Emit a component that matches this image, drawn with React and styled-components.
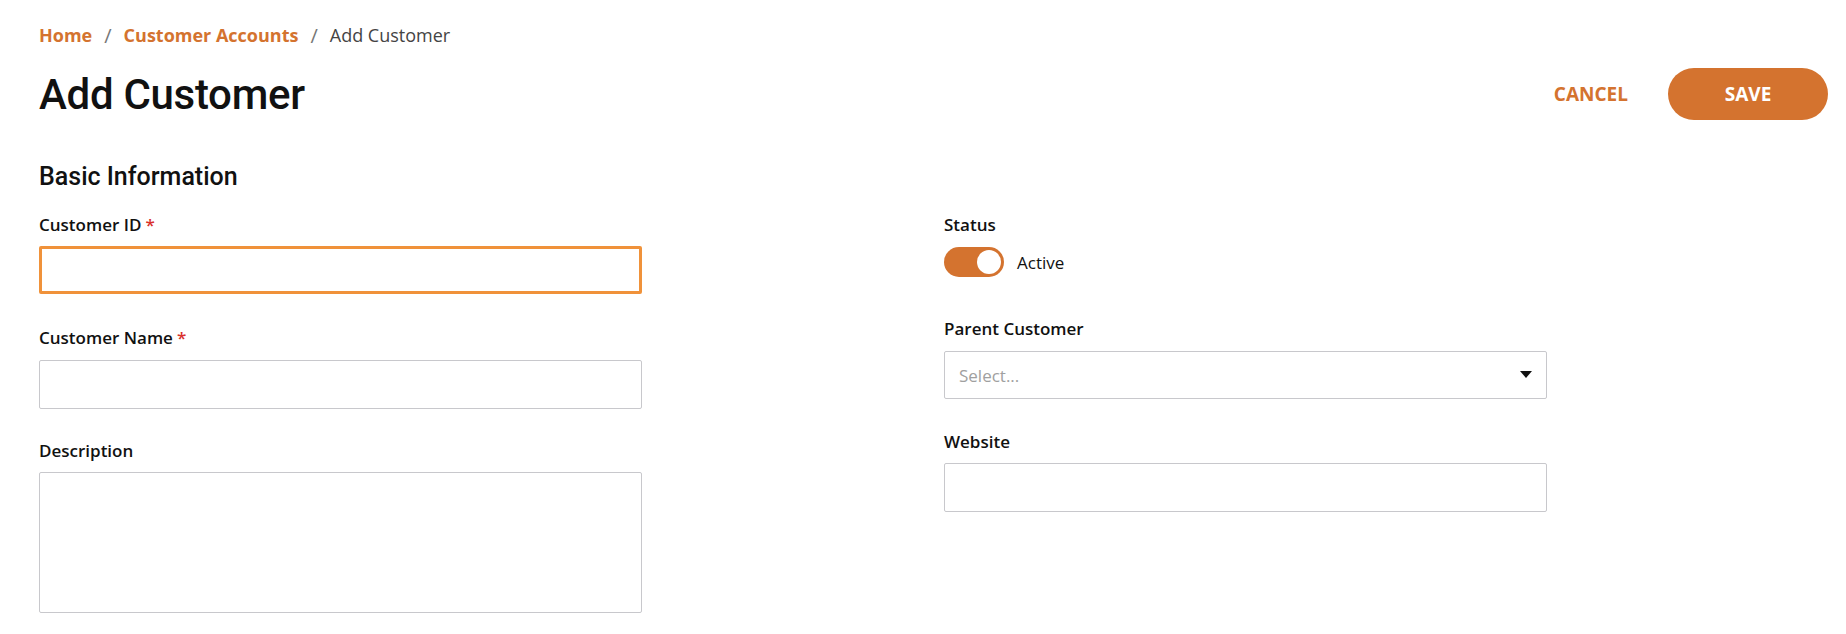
import React from "react";
import styled, { createGlobalStyle } from "styled-components";

const G = createGlobalStyle`
  body { margin: 0; background: #fff; font-family: "Open Sans", sans-serif; color: #111; }
  * { box-sizing: border-box; }
`;
const OR = "#d4732f";
const Page = styled.div`padding: 22px 18px 0 39px;`;
const Crumbs = styled.nav`display: flex; align-items: center; gap: 12px; font-size: 18px; height: 26px;`;
const Crumb = styled.span`color: ${p => p.$link ? OR : "#444"}; font-weight: ${p => p.$link ? 700 : 400};`;
const Sep = styled.span`color: #777; font-size: 20px;`;
const Head = styled.div`display: flex; align-items: center; justify-content: space-between; margin-top: 20px; height: 52px;`;
const Title = styled.h1`margin: 0; font-family: Roboto, sans-serif; font-weight: 500; font-size: 42px; letter-spacing: -0.3px;`;
const Actions = styled.div`display: flex; align-items: center; gap: 40px;`;
const Cancel = styled.button`border: 0; background: none; color: ${OR}; font: 700 19px "Open Sans", sans-serif; padding: 0;`;
const Save = styled.button`border: 0; background: ${OR}; color: #fff; font: 700 19px "Open Sans", sans-serif; width: 160px; height: 52px; border-radius: 26px;`;
const Section = styled.h2`margin: 42px 0 0; font-family: Roboto, sans-serif; font-weight: 500; font-size: 25px;`;
const Grid = styled.div`display: grid; grid-template-columns: 603px 603px; column-gap: 302px; margin-top: 22px;`;
const Col = styled.div`display: flex; flex-direction: column;`;
const Label = styled.label`font-size: 17px; font-weight: 600; height: 24px; display: block; margin-bottom: ${p => p.$mb || 10}px;`;
const Star = styled.span`color: #d9302c; margin-left: 4px;`;
const Field = styled.div`margin-bottom: ${p => p.$mb || 30}px;`;
const Input = styled.div`
  height: ${p => p.$h || 48}px; border: ${p => p.$focus ? "3px solid #f0923a" : "1px solid #c8c8cc"};
  border-radius: 2px; display: flex; align-items: center; padding: 0 14px; background: #fff;
`;
const Placeholder = styled.span`flex: 1; color: #a0a0a0; font-size: 17px;`;
const ToggleRow = styled.div`display: flex; align-items: center; gap: 13px; height: 30px; margin-top: 7px;`;
const Track = styled.div`width: 60px; height: 30px; border-radius: 15px; background: ${OR}; position: relative;`;
const Knob = styled.div`position: absolute; right: 3px; top: 3px; width: 24px; height: 24px; border-radius: 50%; background: #fff;`;
const Active = styled.span`font-size: 17px;`;

export default function App() {
  return (
    <Page>
      <G />
      <Crumbs>
        <Crumb $link>Home</Crumb><Sep>/</Sep>
        <Crumb $link>Customer Accounts</Crumb><Sep>/</Sep>
        <Crumb>Add Customer</Crumb>
      </Crumbs>
      <Head>
        <Title>Add Customer</Title>
        <Actions><Cancel>CANCEL</Cancel><Save>SAVE</Save></Actions>
      </Head>
      <Section>Basic Information</Section>
      <Grid>
        <Col>
          <Field $mb={32}><Label $mb={9}>Customer ID<Star>*</Star></Label><Input $focus /></Field>
          <Field $mb={30}><Label $mb={10}>Customer Name<Star>*</Star></Label><Input $h={49} /></Field>
          <Field><Label $mb={9}>Description</Label><Input $h={141} /></Field>
        </Col>
        <Col>
          <Field $mb={40}><Label $mb={0}>Status</Label>
            <ToggleRow><Track><Knob /></Track><Active>Active</Active></ToggleRow>
          </Field>
          <Field $mb={31}><Label $mb={10}>Parent Customer</Label>
            <Input $h={48}><Placeholder>Select...</Placeholder>
              <svg width="12" height="8" viewBox="0 0 12 8"><path d="M0 0h12L6 7z" fill="#111" /></svg>
            </Input>
          </Field>
          <Field><Label $mb={9}>Website</Label><Input $h={49} /></Field>
        </Col>
      </Grid>
    </Page>
  );
}
